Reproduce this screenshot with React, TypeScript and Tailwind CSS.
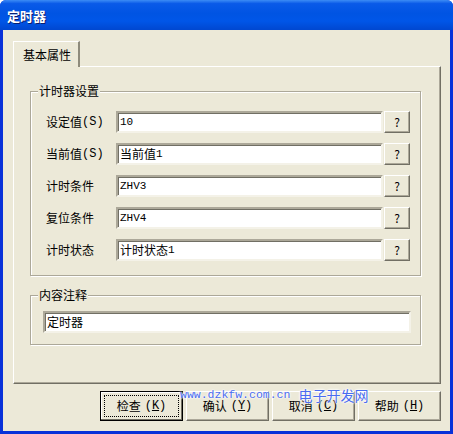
import React from "react";

const font = { fontFamily: '"Noto Sans CJK SC", "Liberation Sans", sans-serif' };
const mono = { fontFamily: '"Liberation Mono", "Noto Sans CJK SC", monospace' };

function Field({ label, paren, value }: { label: string; paren?: string; value: React.ReactNode }) {
  return (
    <div className="flex items-center h-[22px]">
      <div className="w-[85px] shrink-0 pl-[15px] text-[12px] leading-none text-black whitespace-nowrap flex items-center">
        <span>{label}</span>
        {paren && <span style={mono} className="text-[12px]">{paren}</span>}
      </div>
      <div className="w-[267px] shrink-0 h-[22px] bg-white border-2 border-t-[#ACA899] border-l-[#ACA899] border-r-[#F4F2E8] border-b-[#F4F2E8] shadow-[inset_1px_1px_0_#716F64] flex items-center pl-[2px] text-[12px] leading-none">
        {value}
      </div>
      <div className="ml-[1px] shrink-0 w-[26px] h-[22px] border border-t-white border-l-white border-r-[#716F64] border-b-[#716F64] shadow-[inset_-1px_-1px_0_#ACA899] flex items-center justify-center text-[12px] leading-none">
        ?
      </div>
    </div>
  );
}

function Btn({ label, k, focused }: { label: string; k: string; focused?: boolean }) {
  return (
    <div
      className={
        "w-[83px] h-[30px] flex items-center justify-center text-[12px] leading-none " +
        (focused
          ? "border border-black shadow-[inset_-1px_-1px_0_#716F64,inset_1px_1px_0_white]"
          : "border border-t-white border-l-white border-r-[#716F64] border-b-[#716F64] shadow-[inset_-1px_-1px_0_#ACA899]")
      }
    >
      <div className={"flex items-center justify-center " + (focused ? "w-[75px] h-[22px] border border-dotted border-black" : "")}>
        <span>{label}</span>
        <span className="ml-[4px]" style={mono}>(<span className="underline">{k}</span>)</span>
      </div>
    </div>
  );
}

const latin = (s: string) => <span style={mono} className="text-[11px]">{s}</span>;

export default function App() {
  return (
    <div className="w-[453px] h-[434px] bg-[#0831D9] flex flex-col relative overflow-hidden rounded-t-[6px]" style={font}>
      <div className="h-[30px] flex items-center pl-[7px] bg-[linear-gradient(180deg,#3C8CF5_0%,#0A5AE8_12%,#0054E3_45%,#0056E8_70%,#0047D0_100%)]">
        <span className="text-white font-bold text-[13px] leading-none [text-shadow:1px_1px_0_#0A1E6E]">定时器</span>
      </div>
      <div className="flex-1 mx-[3px] mb-[3px] bg-[#ECE9D8] flex flex-col pl-[10px] pr-[9px] pt-[11px]">
        <div className="w-[67px] h-[26px] border-t border-l border-white border-r-2 border-r-[#8E8B7C] flex items-center justify-center text-[12px] leading-none relative z-10 -mb-px bg-[#ECE9D8]">
          <span className="ml-[2px]">基本属性</span>
        </div>
        <div className="h-[318px] border border-t-white border-l-white border-r-[#716F64] border-b-[#716F64] shadow-[inset_-1px_-1px_0_#ACA899] pl-[16px] pr-[19px] pt-[24px] flex flex-col">
          <div className="relative h-[185px] border border-[#ACA899] shadow-[inset_1px_1px_0_white,1px_1px_0_white] pt-[19px] flex flex-col gap-[10px]">
            <div className="absolute -top-[8px] left-[7px] px-[1px] bg-[#ECE9D8] text-[12px] leading-[14px]">计时器设置</div>
            <Field label="设定值" paren="(S)" value={latin("10")} />
            <Field label="当前值" paren="(S)" value={<>当前值{latin("1")}</>} />
            <Field label="计时条件" value={latin("ZHV3")} />
            <Field label="复位条件" value={latin("ZHV4")} />
            <Field label="计时状态" value={<>计时状态{latin("1")}</>} />
          </div>
          <div className="relative mt-[19px] h-[50px] border border-[#ACA899] shadow-[inset_1px_1px_0_white,1px_1px_0_white] pt-[15px] pl-[12px] pr-[9px]">
            <div className="absolute -top-[8px] left-[7px] px-[1px] bg-[#ECE9D8] text-[12px] leading-[14px]">内容注释</div>
            <div className="h-[22px] bg-white border-2 border-t-[#ACA899] border-l-[#ACA899] border-r-[#F4F2E8] border-b-[#F4F2E8] shadow-[inset_1px_1px_0_#716F64] flex items-center pl-[2px] text-[12px] leading-none">
              定时器
            </div>
          </div>
        </div>
        <div className="mt-[7px] flex justify-end gap-[3px]">
          <Btn label="检查" k="K" focused />
          <Btn label="确认" k="Y" />
          <Btn label="取消" k="C" />
          <Btn label="帮助" k="H" />
        </div>
      </div>
      <div className="absolute left-[180px] top-[388px] flex items-end text-[#4A6CF0] [text-shadow:0_0_2px_white,0_0_2px_white,0_0_3px_white]">
        <span className="text-[11.5px] leading-none pb-[2px]" style={mono}>www.dzkfw.com.cn</span>
        <span className="ml-[8px] text-[14px] leading-none">电子开发网</span>
      </div>
    </div>
  );
}
